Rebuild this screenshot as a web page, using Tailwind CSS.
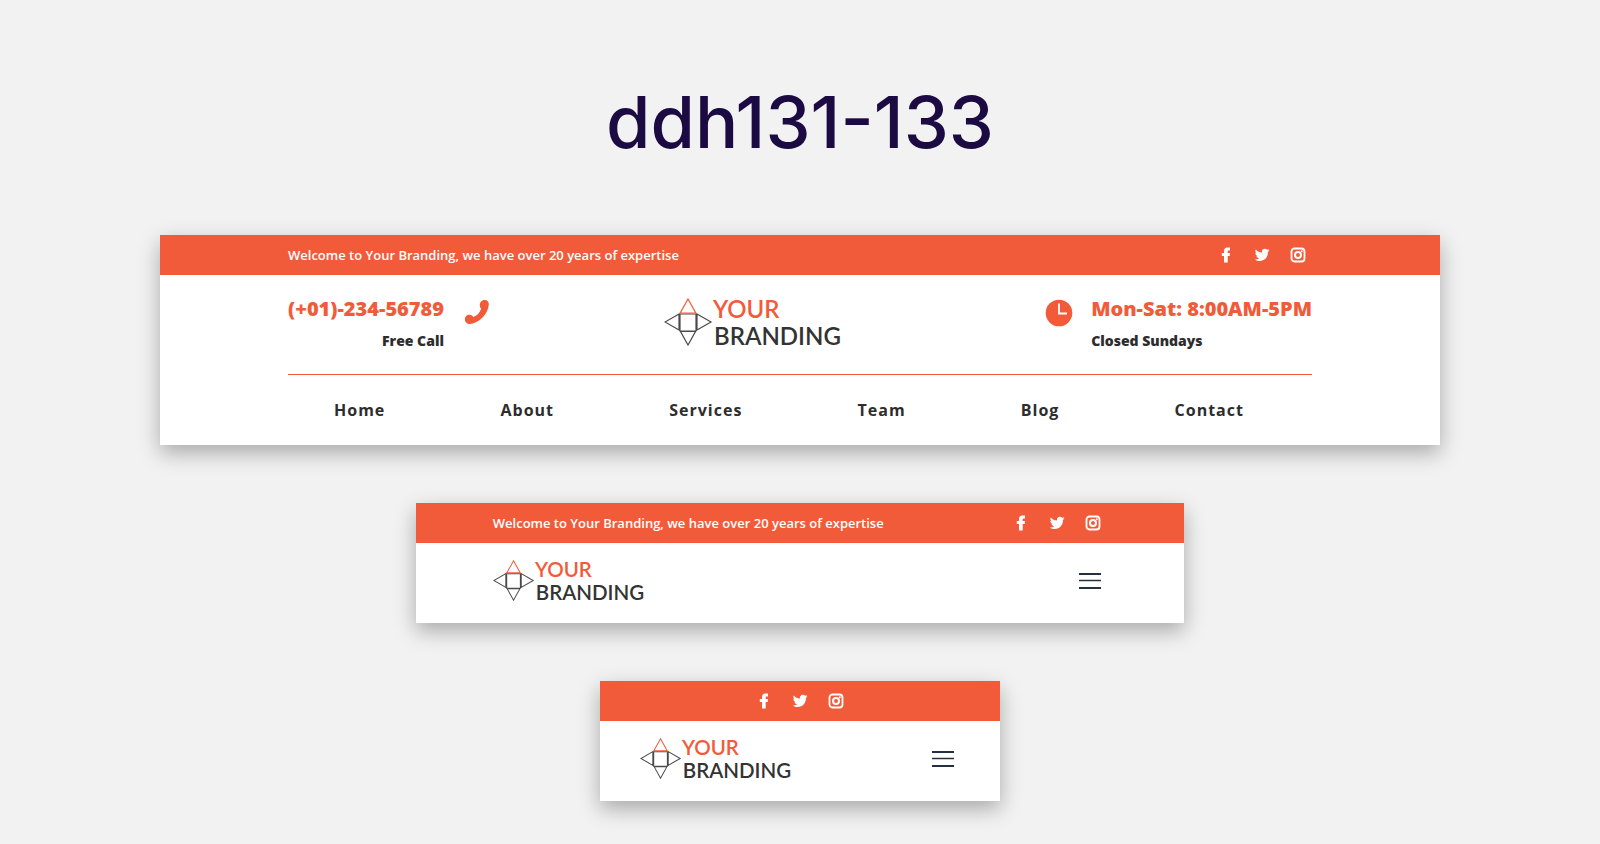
<!DOCTYPE html>
<html lang="en">
<head>
<meta charset="utf-8">
<meta name="viewport" content="width=device-width, initial-scale=1">
<title>ddh131-133</title>
<script src="https://cdn.jsdelivr.net/npm/@tailwindcss/browser@4"></script>
</head>
<body class="min-h-screen bg-[#f2f2f2] font-['Open_Sans',sans-serif] text-[#2d2d2d]">
<svg class="hidden" aria-hidden="true">
  <symbol id="facebook" viewBox="0 0 16 16"><path d="M6 15.500V9H3.800V6H6V4.200C6 1.900 7.200.600 9.200.600H12v3h-1.500C9.900 3.600 9.700 4 9.700 4.600V6H12l-.300 3h-2v6.500z"/></symbol>
  <symbol id="twitter" viewBox="0 0 16 16"><path d="M15.500 3.200c-.500.250-1.100.400-1.700.500.600-.400 1.100-1 1.300-1.600-.600.300-1.200.600-1.900.700A3 3 0 0 0 8 5.500C5.500 5.400 3.300 4.200 1.800 2.400 1 3.800 1.400 5.500 2.700 6.400c-.500 0-1-.150-1.400-.370 0 1.400 1 2.700 2.400 3-.400.100-.900.120-1.300.040.400 1.200 1.500 2.100 2.800 2.100A6 6 0 0 1 .800 12.400c1.500 1 3.200 1.500 5 1.500 5 0 8.300-4.200 8.100-9 .600-.450 1.200-1 1.600-1.700z"/></symbol>
  <symbol id="instagram" viewBox="0 0 16 16"><rect x="1.500" y="1.500" width="13" height="13" rx="3" fill="none" stroke="currentColor" stroke-width="1.800"/><circle cx="8" cy="8" r="3" fill="none" stroke="currentColor" stroke-width="2"/><circle cx="11.800" cy="4.200" r="1"/></symbol>
  <symbol id="brand" viewBox="0 0 180 50">
    <g fill="none" stroke="#4a4a4a" stroke-width="1.200">
      <path d="M16 17h16v17H16zM15 17v16L1 25zM33 17v16l14-8zM16.500 34.500h15L24 48z"/>
      <path d="M24 2l7.800 14H16.200z" stroke="#f25b3a"/>
    </g>
    <g font-family="Lato, sans-serif" font-size="24" font-weight="600">
      <text x="49" y="21" fill="#f25b3a">YOUR</text>
      <text x="50" y="48" fill="#333333">BRANDING</text>
    </g>
  </symbol>
  <symbol id="menu" viewBox="0 0 22 16"><path d="M0 1h22M0 15h22" stroke="currentColor" stroke-width="2"/><path d="M0 7.500h22" stroke="currentColor" stroke-width="1.500"/></symbol>
</svg>
<main class="flex flex-col items-center pb-10">
  <h1 class="pt-[74px] pb-[65px] text-center font-[Inter,sans-serif] text-[72px] leading-[96px] font-medium text-[#1c0a42]">ddh131-133</h1>

  <header class="w-4/5 bg-white shadow-[0_8px_20px_rgba(0,0,0,0.3)]">
    <div class="bg-[#f25b3a] text-white">
      <div class="mx-auto flex h-10 w-4/5 items-center justify-between">
        <p class="text-[13px] leading-[22px] font-semibold">Welcome to Your Branding, we have over 20 years of expertise</p>
        <div class="flex gap-5 pr-[6px]">
          <a href="#" aria-label="Facebook"><svg class="size-4 fill-current"><use href="#facebook"/></svg></a>
          <a href="#" aria-label="Twitter"><svg class="size-4 fill-current"><use href="#twitter"/></svg></a>
          <a href="#" aria-label="Instagram"><svg class="size-4 fill-current"><use href="#instagram"/></svg></a>
        </div>
      </div>
    </div>
    <div class="mx-auto w-4/5">
      <div class="grid grid-cols-[376px_1fr_auto] border-b border-[#f25b3a] pt-5 pb-[21px]">
        <div class="flex gap-5">
          <div class="text-right">
            <p class="text-[20px] leading-7 font-extrabold text-[#f25b3a]">(+01)-234-56789</p>
            <p class="mt-[6px] text-[14px] leading-6 font-extrabold">Free Call</p>
          </div>
          <svg class="mt-1 size-[26px] fill-[#f25b3a]" viewBox="0 0 28 28" aria-hidden="true"><path d="M17 6.500C17 3.500 19 1 22 1c3 0 5 2 4.700 5C26 16 17 25.500 6.500 27 3.500 27 1 25 1 22 1 18.500 3.500 17 6 17c2 0 3 1 4 2.500 4-1.500 7-4.500 8.500-9C17.500 9.500 17 8.500 17 6.500z"/></svg>
        </div>
        <a href="#" aria-label="Your Branding" class="mt-[2px] justify-self-start"><svg class="h-[50px] w-[180px]"><use href="#brand"/></svg></a>
        <div class="flex justify-end gap-[18px]">
          <svg class="mt-1 size-7" viewBox="0 0 28 28" aria-hidden="true"><circle cx="14" cy="14" r="13.300" fill="#f25b3a"/><path d="M14 4.500V14.500H22" fill="none" stroke="#fff" stroke-width="1.800"/></svg>
          <div>
            <p class="text-[20px] leading-7 font-extrabold text-[#f25b3a]">Mon-Sat: 8:00AM-5PM</p>
            <p class="mt-[6px] text-[14px] leading-6 font-extrabold">Closed Sundays</p>
          </div>
        </div>
      </div>
      <nav class="flex justify-between pt-[23px] pr-[68px] pb-[23px] pl-[46px] text-base font-bold tracking-[1px]">
        <a href="#">Home</a><a href="#">About</a><a href="#">Services</a><a href="#">Team</a><a href="#">Blog</a><a href="#">Contact</a>
      </nav>
    </div>
  </header>

  <header class="mt-[58px] w-full max-w-[768px] bg-white shadow-[0_8px_20px_rgba(0,0,0,0.3)]">
    <div class="bg-[#f25b3a] text-white">
      <div class="mx-auto flex h-10 w-4/5 items-center justify-between">
        <p class="text-[13px] leading-[22px] font-semibold">Welcome to Your Branding, we have over 20 years of expertise</p>
        <div class="flex gap-5 pr-[6px]">
          <a href="#" aria-label="Facebook"><svg class="size-4 fill-current"><use href="#facebook"/></svg></a>
          <a href="#" aria-label="Twitter"><svg class="size-4 fill-current"><use href="#twitter"/></svg></a>
          <a href="#" aria-label="Instagram"><svg class="size-4 fill-current"><use href="#instagram"/></svg></a>
        </div>
      </div>
    </div>
    <div class="mx-auto flex h-20 w-4/5 items-center justify-between pr-[6px] pb-[5px]">
      <a href="#" aria-label="Your Branding"><svg class="block h-[43px] w-[154px]"><use href="#brand"/></svg></a>
      <button type="button" aria-label="Open menu" class="text-[#24303f]"><svg class="block h-4 w-[22px]"><use href="#menu"/></svg></button>
    </div>
  </header>

  <header class="mt-[58px] w-full max-w-[400px] bg-white shadow-[0_8px_20px_rgba(0,0,0,0.3)]">
    <div class="flex h-10 items-center justify-center gap-5 bg-[#f25b3a] text-white">
      <a href="#" aria-label="Facebook"><svg class="size-4 fill-current"><use href="#facebook"/></svg></a>
      <a href="#" aria-label="Twitter"><svg class="size-4 fill-current"><use href="#twitter"/></svg></a>
      <a href="#" aria-label="Instagram"><svg class="size-4 fill-current"><use href="#instagram"/></svg></a>
    </div>
    <div class="mx-auto flex h-20 w-4/5 items-center justify-between pr-[6px] pb-[5px]">
      <a href="#" aria-label="Your Branding"><svg class="block h-[43px] w-[154px]"><use href="#brand"/></svg></a>
      <button type="button" aria-label="Open menu" class="text-[#24303f]"><svg class="block h-4 w-[22px]"><use href="#menu"/></svg></button>
    </div>
  </header>
</main>
</body>
</html>
